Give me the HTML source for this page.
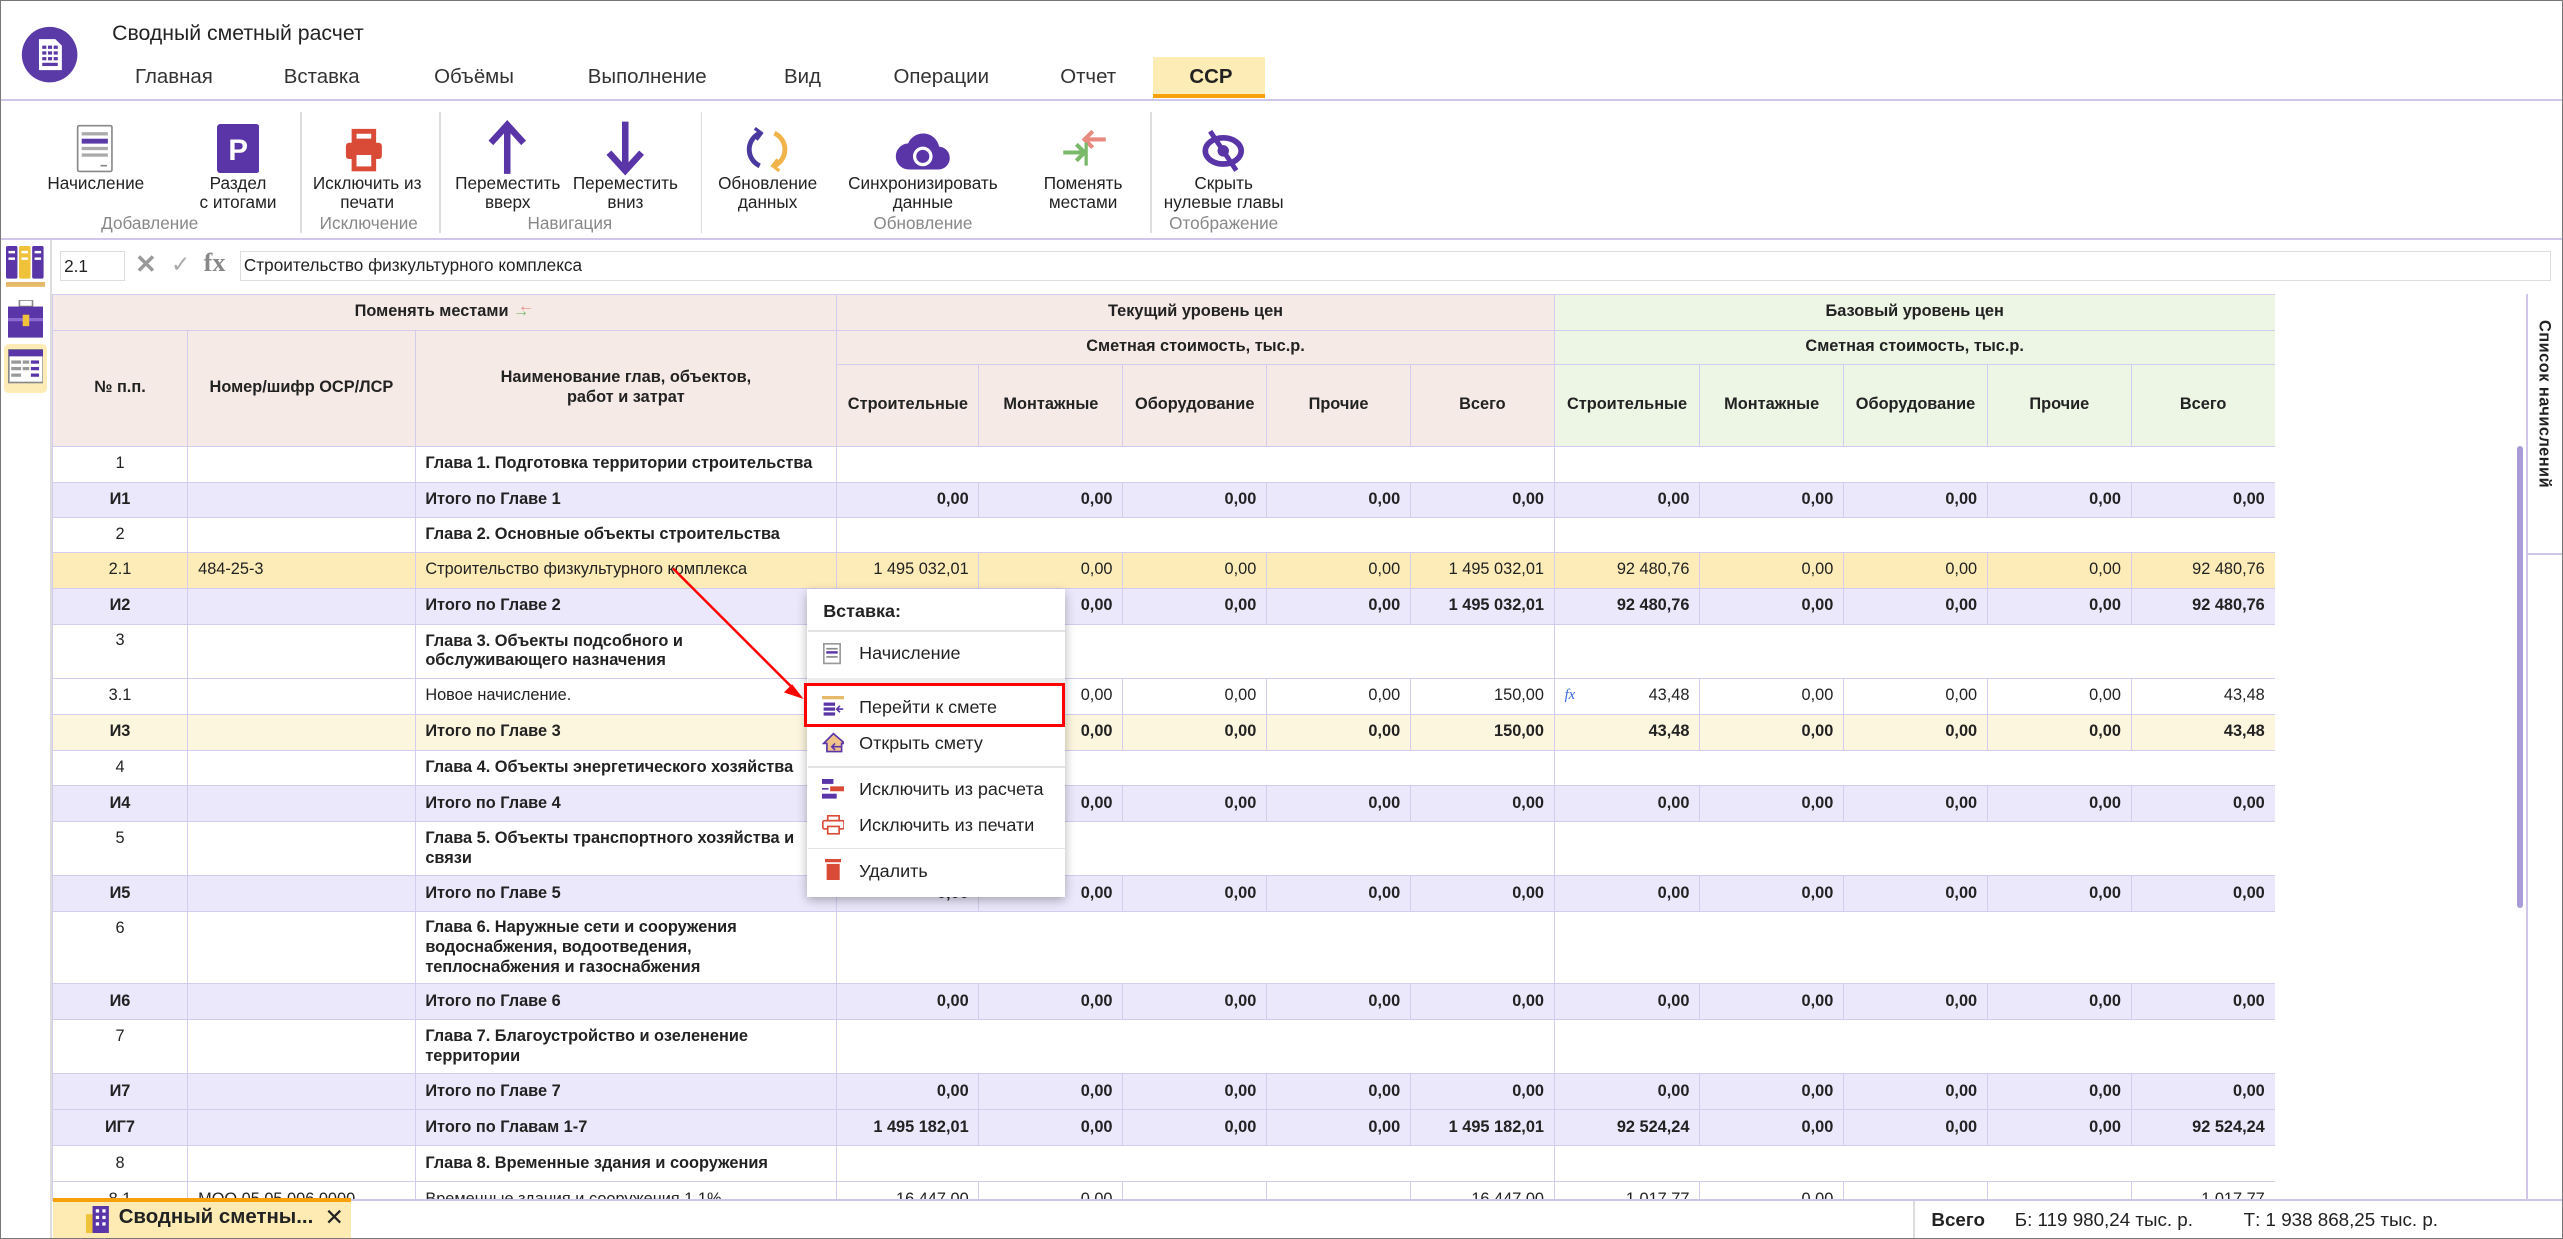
<!DOCTYPE html>
<html><head><meta charset="utf-8">
<style>
html,body{margin:0;padding:0;background:#fff;overflow:hidden}
#root{position:relative;width:1568px;height:758px;zoom:1.63457;font-family:"Liberation Sans",Arial,sans-serif;color:#222;overflow:hidden;border:1px solid #777;box-sizing:border-box}
.a{position:absolute}
.tab{position:absolute;top:40px;font-size:12.5px;color:#333}
.rl{position:absolute;top:106px;font-size:10.5px;text-align:center;line-height:11.5px;color:#222;transform:translateX(-50%);white-space:nowrap}
.gl{position:absolute;top:130px;font-size:10.5px;color:#888;transform:translateX(-50%);white-space:nowrap}
.sep{position:absolute;top:68px;width:1px;height:74px;background:#ddd}
table{border-collapse:collapse;table-layout:fixed;font-size:10px}
td{border:1px solid #d4ccee;padding:0 6px;overflow:hidden;white-space:nowrap;line-height:12px}
.hd td{font-weight:bold;text-align:center;background:#f5eae6}
.hd td.g{background:#edf5e5}
td.c{text-align:center}
td.r{text-align:right}
td.n{white-space:normal}
tr.t td{background:#ebe8fc;font-weight:bold}
tr.s td{background:#fdebb8}
tr.y td{background:#fdf6df;font-weight:bold}
tr.w td.b{font-weight:bold}
.mi{position:absolute;left:525px;font-size:11px;color:#222}
.ms{position:absolute;left:494px;width:157px;height:1px;background:#e3e3e3}
</style></head><body><div id="root">

<svg class="a" style="left:12px;top:15px" width="35" height="35" viewBox="0 0 35 35"><circle cx="17.5" cy="17.5" r="17" fill="#5a3aa6"/><path d="M11 8h10l4 4v15H11z" fill="#fff"/><g fill="#5a3aa6"><rect x="13" y="12" width="2.5" height="2"/><rect x="16.5" y="12" width="2.5" height="2"/><rect x="20" y="12" width="2.5" height="2"/><rect x="13" y="15.5" width="2.5" height="2"/><rect x="16.5" y="15.5" width="2.5" height="2"/><rect x="20" y="15.5" width="2.5" height="2"/><rect x="13" y="19" width="2.5" height="2"/><rect x="16.5" y="19" width="2.5" height="2"/><rect x="20" y="19" width="2.5" height="2"/><rect x="13" y="22.5" width="9.5" height="2"/></g></svg>
<div class="a" style="left:68px;top:12px;font-size:13px;color:#222">Сводный сметный расчет</div>
<div class="tab" style="left:82px">Главная</div>
<div class="tab" style="left:173px">Вставка</div>
<div class="tab" style="left:265px">Объёмы</div>
<div class="tab" style="left:359px">Выполнение</div>
<div class="tab" style="left:479px">Вид</div>
<div class="tab" style="left:546px">Операции</div>
<div class="tab" style="left:648px">Отчет</div>
<div class="a" style="left:705px;top:34px;width:68px;height:23px;background:#fdecb6;border-bottom:3px solid #f8a20b"></div>
<div class="tab" style="left:727px;font-weight:bold;color:#222">ССР</div>
<div class="a" style="left:0;top:60px;width:1568px;height:1px;background:#cfc6ea"></div>

<svg class="a" style="left:46px;top:75px" width="24" height="30" viewBox="0 0 24 30"><rect x="1" y="1" width="21" height="28" fill="#fff" stroke="#888" rx="1"/><rect x="3.5" y="5" width="16" height="2" fill="#aaa"/><rect x="3.5" y="9" width="16" height="3" fill="#5a3aa6"/><rect x="3.5" y="14" width="16" height="2" fill="#aaa"/><rect x="3.5" y="18" width="16" height="2" fill="#aaa"/><rect x="15" y="25" width="4" height="1" fill="#888"/></svg>
<svg class="a" style="left:132px;top:75px" width="26" height="30" viewBox="0 0 26 30"><rect width="26" height="30" rx="2" fill="#5a35a8"/><text x="13" y="22" font-family="Liberation Sans" font-weight="bold" font-size="18" fill="#fff" text-anchor="middle">P</text></svg>
<svg class="a" style="left:208px;top:78px" width="28" height="28" viewBox="0 0 28 28"><path d="M8 2h12v6H8z" fill="none" stroke="#d94a37" stroke-width="3"/><rect x="3" y="9" width="22" height="10" rx="2" fill="#d94a37"/><rect x="8" y="15" width="12" height="10" fill="#fff" stroke="#d94a37" stroke-width="3"/></svg>
<svg class="a" style="left:297px;top:73px" width="26" height="34" viewBox="0 0 26 34"><path d="M13 33V4M3 14L13 3l10 11" fill="none" stroke="#5a35a8" stroke-width="4"/></svg>
<svg class="a" style="left:369px;top:73px" width="26" height="34" viewBox="0 0 26 34"><path d="M13 1v29M3 20l10 11 10-11" fill="none" stroke="#5a35a8" stroke-width="4"/></svg>
<svg class="a" style="left:455px;top:76px" width="28" height="30" viewBox="0 0 28 30"><path d="M9 5A11 11 0 0 0 9 25" fill="none" stroke="#4a3aa0" stroke-width="3"/><path d="M18 5A11 11 0 0 1 18 25" fill="none" stroke="#f0b44a" stroke-width="3"/><path d="M6 2l4 3-3 4" fill="none" stroke="#4a3aa0" stroke-width="2"/><path d="M21 28l-4-3 3-4" fill="none" stroke="#f0b44a" stroke-width="2"/></svg>
<svg class="a" style="left:547px;top:77px" width="34" height="28" viewBox="0 0 34 28"><path d="M9 26a8 8 0 0 1-1-16 10 10 0 0 1 19 2 7 7 0 0 1-1 14z" fill="#5a35a8"/><circle cx="17" cy="18" r="5" fill="none" stroke="#fff" stroke-width="2"/></svg>
<svg class="a" style="left:648px;top:78px" width="30" height="24" viewBox="0 0 30 24"><path d="M28 7H15M20 2l-5 5 5 5" fill="none" stroke="#e88a80" stroke-width="2.5"/><path d="M2 15h13M10 10l5 5-5 5" fill="none" stroke="#7ab86a" stroke-width="2.5"/><path d="M16 9v14" stroke="#7ab86a" stroke-width="2"/></svg>
<svg class="a" style="left:735px;top:78px" width="26" height="28" viewBox="0 0 26 28"><ellipse cx="13" cy="14" rx="11" ry="8" fill="none" stroke="#5a35a8" stroke-width="3.5"/><circle cx="13" cy="14" r="3.5" fill="#5a35a8"/><path d="M5 2l16 24" stroke="#5a35a8" stroke-width="3"/></svg>
<div class="rl" style="left:58px">Начисление</div>
<div class="rl" style="left:145px">Раздел<br>с итогами</div>
<div class="rl" style="left:224px">Исключить из<br>печати</div>
<div class="rl" style="left:310px">Переместить<br>вверх</div>
<div class="rl" style="left:382px">Переместить<br>вниз</div>
<div class="rl" style="left:469px">Обновление<br>данных</div>
<div class="rl" style="left:564px">Синхронизировать<br>данные</div>
<div class="rl" style="left:662px">Поменять<br>местами</div>
<div class="rl" style="left:748px">Скрыть<br>нулевые главы</div>
<div class="gl" style="left:91px">Добавление</div>
<div class="gl" style="left:225px">Исключение</div>
<div class="gl" style="left:348px">Навигация</div>
<div class="gl" style="left:564px">Обновление</div>
<div class="gl" style="left:748px">Отображение</div>
<div class="sep" style="left:183px"></div><div class="sep" style="left:268px"></div><div class="sep" style="left:428px"></div><div class="sep" style="left:703px"></div>
<div class="a" style="left:0;top:145px;width:1568px;height:1px;background:#cfc6ea"></div>

<div class="a" style="left:30px;top:146px;width:1px;height:612px;background:#ddd"></div>
<svg class="a" style="left:3px;top:150px" width="24" height="26" viewBox="0 0 24 26"><rect x="0" y="0" width="7" height="20" rx="1" fill="#5a35a8"/><rect x="8" y="0" width="7" height="20" rx="1" fill="#f0c23a"/><rect x="16" y="0" width="7" height="20" rx="1" fill="#5a35a8"/><g fill="#fff"><rect x="1.5" y="3" width="4" height="1.5"/><rect x="1.5" y="7" width="4" height="1.5"/><rect x="9.5" y="3" width="4" height="1.5"/><rect x="9.5" y="7" width="4" height="1.5"/><rect x="17.5" y="3" width="4" height="1.5"/><rect x="17.5" y="7" width="4" height="1.5"/></g><rect x="0" y="22" width="24" height="3" fill="#e7b96a"/></svg>
<svg class="a" style="left:4px;top:183px" width="22" height="23" viewBox="0 0 22 23"><rect x="7" y="0" width="8" height="4" fill="none" stroke="#888"/><rect x="0" y="4" width="22" height="19" fill="#5a35a8"/><rect x="0" y="11" width="22" height="2" fill="#8a6ad0"/><rect x="9" y="9" width="4" height="7" fill="#f0c23a"/></svg>
<div class="a" style="left:2px;top:210px;width:26px;height:30px;background:#fdecb6;border-radius:3px"></div>
<svg class="a" style="left:4px;top:213px" width="22" height="24" viewBox="0 0 22 24"><rect x="0.5" y="0.5" width="21" height="20" fill="#fff" stroke="#888"/><rect x="0.5" y="0.5" width="21" height="4" fill="#5a35a8"/><g fill="#999"><rect x="2" y="7" width="6" height="2"/><rect x="2" y="11" width="6" height="2"/><rect x="2" y="15" width="6" height="2"/><rect x="9" y="7" width="4" height="2"/><rect x="9" y="11" width="4" height="2"/></g><g fill="#5a35a8"><rect x="14" y="7" width="5" height="2"/><rect x="14" y="11" width="5" height="2"/><rect x="14" y="15" width="5" height="2"/></g></svg>

<div class="a" style="left:36px;top:153px;width:40px;height:18px;border:1px solid #ddd;font-size:10.5px;line-height:18px;padding-left:2px;box-sizing:border-box">2.1</div>
<div class="a" style="left:82px;top:152px;font-size:16px;color:#999;font-weight:bold">✕</div>
<div class="a" style="left:104px;top:153px;font-size:14px;color:#aaa">✓</div>
<div class="a" style="left:124px;top:151px;font-size:16px;color:#888;font-weight:bold;font-family:'Liberation Serif',serif">fx</div>
<div class="a" style="left:146px;top:153px;width:1414px;height:18px;border:1px solid #ddd;box-sizing:border-box;font-size:10.5px;line-height:17px;padding-left:2px">Строительство физкультурного комплекса</div>

<div class="a" style="left:31px;top:179px;width:1360px;height:554px;overflow:hidden">
<table style="width:1360px">
<colgroup><col style="width:83px"><col style="width:139px"><col style="width:258px"><col style="width:87px"><col style="width:88px"><col style="width:88px"><col style="width:88px"><col style="width:88px"><col style="width:89px"><col style="width:88px"><col style="width:88px"><col style="width:88px"><col style="width:88px"></colgroup>
<tr class="hd" style="height:22px"><td colspan="3">Поменять местами <span style="color:#7ab86a">→</span><span style="color:#e88a80;margin-left:-7px;position:relative;top:-3px">←</span></td><td colspan="5">Текущий уровень цен</td><td colspan="5" class="g">Базовый уровень цен</td></tr>
<tr class="hd" style="height:21px"><td rowspan="2">№ п.п.</td><td rowspan="2">Номер/шифр ОСР/ЛСР</td><td rowspan="2" style="white-space:normal">Наименование глав, объектов,<br>работ и затрат</td><td colspan="5">Сметная стоимость, тыс.р.</td><td colspan="5" class="g">Сметная стоимость, тыс.р.</td></tr>
<tr class="hd" style="height:50px"><td>Строительные</td><td>Монтажные</td><td>Оборудование</td><td>Прочие</td><td>Всего</td><td class="g">Строительные</td><td class="g">Монтажные</td><td class="g">Оборудование</td><td class="g">Прочие</td><td class="g">Всего</td></tr>
<tr class="w" style="height:22px"><td class="c">1</td><td></td><td class="b">Глава 1. Подготовка территории строительства</td><td colspan="5"></td><td colspan="5"></td></tr>
<tr class="t" style="height:22px"><td class="c">И1</td><td></td><td>Итого по Главе 1</td><td class="r">0,00</td><td class="r">0,00</td><td class="r">0,00</td><td class="r">0,00</td><td class="r">0,00</td><td class="r">0,00</td><td class="r">0,00</td><td class="r">0,00</td><td class="r">0,00</td><td class="r">0,00</td></tr>
<tr class="w" style="height:21px"><td class="c">2</td><td></td><td class="b">Глава 2. Основные объекты строительства</td><td colspan="5"></td><td colspan="5"></td></tr>
<tr class="s" style="height:22px"><td class="c">2.1</td><td>484-25-3</td><td>Строительство физкультурного комплекса</td><td class="r">1 495 032,01</td><td class="r">0,00</td><td class="r">0,00</td><td class="r">0,00</td><td class="r">1 495 032,01</td><td class="r">92 480,76</td><td class="r">0,00</td><td class="r">0,00</td><td class="r">0,00</td><td class="r">92 480,76</td></tr>
<tr class="t" style="height:22px"><td class="c">И2</td><td></td><td>Итого по Главе 2</td><td class="r">1 495 032,01</td><td class="r">0,00</td><td class="r">0,00</td><td class="r">0,00</td><td class="r">1 495 032,01</td><td class="r">92 480,76</td><td class="r">0,00</td><td class="r">0,00</td><td class="r">0,00</td><td class="r">92 480,76</td></tr>
<tr class="w" style="height:33px"><td class="c" style="vertical-align:top;padding-top:4px">3</td><td></td><td class="b n">Глава 3. Объекты подсобного и обслуживающего назначения</td><td colspan="5"></td><td colspan="5"></td></tr>
<tr style="height:22px"><td class="c">3.1</td><td></td><td>Новое начисление.</td><td class="r">150,00</td><td class="r">0,00</td><td class="r">0,00</td><td class="r">0,00</td><td class="r">150,00</td><td class="r"><span style="float:left;color:#3a6ae0;font-style:italic;font-family:'Liberation Serif',serif;font-size:9px">fx</span>43,48</td><td class="r">0,00</td><td class="r">0,00</td><td class="r">0,00</td><td class="r">43,48</td></tr>
<tr class="y" style="height:22px"><td class="c">И3</td><td></td><td>Итого по Главе 3</td><td class="r">150,00</td><td class="r">0,00</td><td class="r">0,00</td><td class="r">0,00</td><td class="r">150,00</td><td class="r">43,48</td><td class="r">0,00</td><td class="r">0,00</td><td class="r">0,00</td><td class="r">43,48</td></tr>
<tr class="w" style="height:22px"><td class="c">4</td><td></td><td class="b">Глава 4. Объекты энергетического хозяйства</td><td colspan="5"></td><td colspan="5"></td></tr>
<tr class="t" style="height:22px"><td class="c">И4</td><td></td><td>Итого по Главе 4</td><td class="r">0,00</td><td class="r">0,00</td><td class="r">0,00</td><td class="r">0,00</td><td class="r">0,00</td><td class="r">0,00</td><td class="r">0,00</td><td class="r">0,00</td><td class="r">0,00</td><td class="r">0,00</td></tr>
<tr class="w" style="height:33px"><td class="c" style="vertical-align:top;padding-top:4px">5</td><td></td><td class="b n">Глава 5. Объекты транспортного хозяйства и связи</td><td colspan="5"></td><td colspan="5"></td></tr>
<tr class="t" style="height:22px"><td class="c">И5</td><td></td><td>Итого по Главе 5</td><td class="r">0,00</td><td class="r">0,00</td><td class="r">0,00</td><td class="r">0,00</td><td class="r">0,00</td><td class="r">0,00</td><td class="r">0,00</td><td class="r">0,00</td><td class="r">0,00</td><td class="r">0,00</td></tr>
<tr class="w" style="height:44px"><td class="c" style="vertical-align:top;padding-top:4px">6</td><td></td><td class="b n">Глава 6. Наружные сети и сооружения водоснабжения, водоотведения, теплоснабжения и газоснабжения</td><td colspan="5"></td><td colspan="5"></td></tr>
<tr class="t" style="height:22px"><td class="c">И6</td><td></td><td>Итого по Главе 6</td><td class="r">0,00</td><td class="r">0,00</td><td class="r">0,00</td><td class="r">0,00</td><td class="r">0,00</td><td class="r">0,00</td><td class="r">0,00</td><td class="r">0,00</td><td class="r">0,00</td><td class="r">0,00</td></tr>
<tr class="w" style="height:33px"><td class="c" style="vertical-align:top;padding-top:4px">7</td><td></td><td class="b n">Глава 7. Благоустройство и озеленение территории</td><td colspan="5"></td><td colspan="5"></td></tr>
<tr class="t" style="height:22px"><td class="c">И7</td><td></td><td>Итого по Главе 7</td><td class="r">0,00</td><td class="r">0,00</td><td class="r">0,00</td><td class="r">0,00</td><td class="r">0,00</td><td class="r">0,00</td><td class="r">0,00</td><td class="r">0,00</td><td class="r">0,00</td><td class="r">0,00</td></tr>
<tr class="t" style="height:22px"><td class="c">ИГ7</td><td></td><td>Итого по Главам 1-7</td><td class="r">1 495 182,01</td><td class="r">0,00</td><td class="r">0,00</td><td class="r">0,00</td><td class="r">1 495 182,01</td><td class="r">92 524,24</td><td class="r">0,00</td><td class="r">0,00</td><td class="r">0,00</td><td class="r">92 524,24</td></tr>
<tr class="w" style="height:22px"><td class="c">8</td><td></td><td class="b">Глава 8. Временные здания и сооружения</td><td colspan="5"></td><td colspan="5"></td></tr>
<tr style="height:22px"><td class="c">8.1</td><td>МОО 05 05 006 0000</td><td>Временные здания и сооружения 1,1%</td><td class="r">16 447,00</td><td class="r">0,00</td><td></td><td></td><td class="r">16 447,00</td><td class="r">1 017,77</td><td class="r">0,00</td><td></td><td></td><td class="r">1 017,77</td></tr>
</table></div>

<div class="a" style="left:1545px;top:179px;width:1px;height:554px;background:#cfc6ea"></div>
<div class="a" style="left:1546px;top:338px;width:22px;height:1px;background:#cfc6ea"></div>
<div class="a" style="left:1550px;top:195px;writing-mode:vertical-rl;font-size:10px;font-weight:bold;letter-spacing:0.3px">Список начислений</div>
<div class="a" style="left:1539px;top:272px;width:4px;height:283px;background:#a99bd8;border-radius:2px"></div>

<div class="a" style="left:31px;top:733px;width:1537px;height:1px;background:#cfc6ea"></div>
<div class="a" style="left:32px;top:732px;width:182px;height:26px;background:#fdebb3;border-top:3px solid #f8a20b;box-sizing:border-box"></div>
<svg class="a" style="left:52px;top:737px" width="14" height="17" viewBox="0 0 14 17"><rect x="0" y="5" width="4" height="12" fill="#f0c23a"/><rect x="4" y="0" width="10" height="17" fill="#5a35a8"/><g fill="#fff"><rect x="6" y="2" width="2" height="2"/><rect x="10" y="2" width="2" height="2"/><rect x="6" y="6" width="2" height="2"/><rect x="10" y="6" width="2" height="2"/><rect x="6" y="10" width="2" height="2"/><rect x="10" y="10" width="2" height="2"/></g></svg>
<div class="a" style="left:72px;top:737px;font-size:12.5px;font-weight:bold;color:#222">Сводный сметны...</div>
<div class="a" style="left:198px;top:736px;font-size:14px;color:#222">✕</div>
<div class="a" style="left:1170px;top:734px;width:1px;height:24px;background:#ddd"></div>
<div class="a" style="left:1181px;top:739px;font-size:11.5px;font-weight:bold">Всего</div>
<div class="a" style="left:1232px;top:739px;font-size:11.5px">Б: 119 980,24 тыс. р.</div>
<div class="a" style="left:1372px;top:739px;font-size:11.5px">Т: 1 938 868,25 тыс. р.</div>

<div class="a" style="left:493px;top:360px;width:158px;height:188px;background:#fff;box-shadow:0 2px 6px rgba(0,0,0,.3)"></div>
<div class="mi" style="left:503px;top:367px;font-weight:bold">Вставка:</div>
<div class="ms" style="top:385px"></div>
<svg class="a" style="left:503px;top:393px" width="11" height="13" viewBox="0 0 11 13"><rect x=".5" y=".5" width="10" height="12" fill="#fff" stroke="#999"/><rect x="2" y="3" width="7" height="1" fill="#888"/><rect x="2" y="5" width="7" height="1.5" fill="#5a35a8"/><rect x="2" y="8" width="7" height="1" fill="#888"/></svg>
<div class="mi" style="top:393px">Начисление</div>
<div class="a" style="left:494px;top:414px;width:157px;height:3px;background:#ececec"></div>
<svg class="a" style="left:502px;top:425px" width="14" height="14" viewBox="0 0 14 14"><rect x="0" y="0" width="14" height="2" fill="#e7b96a"/><rect x="1" y="4" width="7" height="2" fill="#5a35a8"/><rect x="1" y="7" width="7" height="2" fill="#5a35a8"/><rect x="1" y="10" width="7" height="2" fill="#5a35a8"/><path d="M13 8H9M11 6l-2 2 2 2" fill="none" stroke="#5a35a8" stroke-width="1"/></svg>
<div class="mi" style="top:426px">Перейти к смете</div>
<div class="a" style="left:491px;top:417px;width:160px;height:27px;border:2px solid #f00;box-sizing:border-box"></div>
<svg class="a" style="left:502px;top:447px" width="14" height="13" viewBox="0 0 14 13"><path d="M7 1L1 7h2v5h9V7h2z" fill="#f0c38a" stroke="#5a35a8" stroke-width="1"/><path d="M12 9H6M8 7l-2 2 2 2" fill="none" stroke="#5a35a8"/></svg>
<div class="mi" style="top:448px">Открыть смету</div>
<div class="ms" style="top:468px"></div>
<svg class="a" style="left:502px;top:476px" width="14" height="12" viewBox="0 0 14 12"><rect x="0" y="0" width="7" height="3" fill="#5a35a8"/><rect x="5" y="4.5" width="9" height="3" fill="#d94a37"/><rect x="0" y="9" width="9" height="3" fill="#5a35a8"/><path d="M0 6h4" stroke="#5a35a8"/></svg>
<div class="mi" style="top:476px">Исключить из расчета</div>
<svg class="a" style="left:502px;top:498px" width="14" height="12" viewBox="0 0 14 12"><rect x="3.5" y=".5" width="7" height="3" fill="none" stroke="#d94a37"/><rect x=".5" y="3.5" width="13" height="5" rx="1" fill="none" stroke="#d94a37"/><rect x="3.5" y="7" width="7" height="4.5" fill="#fff" stroke="#d94a37"/></svg>
<div class="mi" style="top:498px">Исключить из печати</div>
<div class="ms" style="top:518px"></div>
<svg class="a" style="left:504px;top:525px" width="10" height="13" viewBox="0 0 10 13"><rect x="0" y="0" width="10" height="2" fill="#d94a37"/><rect x="1" y="3" width="8" height="10" fill="#d94a37"/></svg>
<div class="mi" style="top:526px">Удалить</div>

<svg class="a" style="left:0;top:0" width="1568" height="758"><line x1="411" y1="347" x2="483" y2="419" stroke="#f00" stroke-width="1.5"/><path d="M491 427l-12-4 5-5z" fill="#f00"/></svg>
</div></body></html>
